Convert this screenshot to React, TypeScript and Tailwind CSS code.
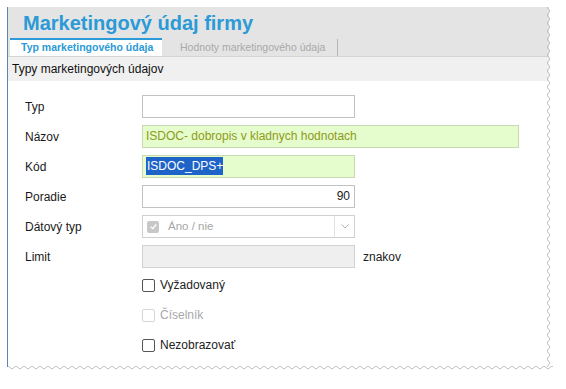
import React from 'react';

const Field = ({ label, children }: { label: string; children: React.ReactNode }) => (
  <div className="flex items-center h-[23px]">
    <div className="w-[117px] shrink-0 text-[12px] text-[#1a1a1a]">{label}</div>
    {children}
  </div>
);

const Check = ({ label, disabled }: { label: string; disabled?: boolean }) => (
  <div className="flex items-center gap-[5px] h-[14px]">
    <span
      className={
        'w-[13px] h-[13px] rounded-[2px] border bg-white ' +
        (disabled ? 'border-[#d6d6d6]' : 'border-[#555]')
      }
    />
    <span className={'text-[12px] ' + (disabled ? 'text-[#a8a8a8]' : 'text-[#222]')}>{label}</span>
  </div>
);

// torn paper edge, drawn as zigzag
const zig = (n: number, step: number, amp: number, vertical = false) => {
  const pts: string[] = [];
  for (let i = 0; i <= n; i++) {
    const a = i * step;
    const b = i % 2 ? amp : 0;
    pts.push(vertical ? `${b},${a}` : `${a},${b}`);
  }
  return pts.join(' ');
};

export default function App() {
  return (
    <div className="w-[566px] h-[389px] bg-white relative overflow-hidden" style={{ fontFamily: '"Liberation Sans", Arial, sans-serif' }}>
      <div className="absolute left-[7px] top-[7px] w-[542px] h-[360px] border-l-[1.5px] border-[#5a86b5] bg-white flex flex-col">
        {/* header */}
        <div className="bg-[#e4e4e4] border-b border-[#d4d4d4]">
          <div className="h-[31px] pl-[15px] pt-[3px] text-[20px] font-bold text-[#2b9ad6] leading-[26px]">
            Marketingový údaj firmy
          </div>
          <div className="flex items-end h-[18px]">
            <div className="ml-[2px] w-[152px] h-[18px] bg-white border-t-2 border-[#2b9ad6] text-[10.5px] font-bold text-[#2b9ad6] pl-[11px] leading-[15px]">
              Typ marketingového údaja
            </div>
            <div className="w-[176px] h-[17px] text-[10.5px] text-[#a9a9a9] pl-[18px] leading-[16px] border-r border-[#b5b5b5]">
              Hodnoty marketingového údaja
            </div>
          </div>
        </div>
        <div className="h-[24px] bg-[#f0f0f0] text-[12px] text-[#111] pl-[4px] leading-[24px]">
          Typy marketingových údajov
        </div>

        {/* form */}
        <div className="pl-[17px] pt-[14px] flex flex-col gap-[7px]">
          <Field label="Typ">
            <div className="w-[213px] h-[23px] border border-[#c2c2c2] bg-white" />
          </Field>
          <Field label="Názov">
            <div className="w-[377px] h-[23px] border border-[#c8d8b0] bg-[#e5fccc] text-[12px] text-[#8f9a20] pl-[3px] leading-[21px]">
              ISDOC- dobropis v kladnych hodnotach
            </div>
          </Field>
          <Field label="Kód">
            <div className="w-[213px] h-[23px] border border-[#c8d8b0] bg-[#e5fccc] text-[12px] pl-[3px] leading-[21px]">
              <span className="bg-[#1e63c8] text-white py-[2px] pl-[1px]">ISDOC_DPS+</span>
            </div>
          </Field>
          <Field label="Poradie">
            <div className="w-[213px] h-[23px] border border-[#c2c2c2] bg-white text-[12px] text-[#222] text-right pr-[4px] leading-[21px]">
              90
            </div>
          </Field>
          <Field label="Dátový typ">
            <div className="w-[213px] h-[23px] border border-[#d0d0d0] bg-white flex items-center">
              <span className="ml-[4px] w-[12px] h-[12px] rounded-[2px] bg-[#c8c8c8] flex items-center justify-center">
                <svg width="9" height="9" viewBox="0 0 10 10">
                  <path d="M2 5.2 L4.2 7.3 L8 2.8" fill="none" stroke="#fff" strokeWidth="1.5" />
                </svg>
              </span>
              <span className="ml-[9px] text-[11.5px] text-[#a6a6a6] flex-1">Áno / nie</span>
              <span className="w-[20px] h-[21px] border-l border-[#e2e2e2] flex items-center justify-center">
                <svg width="8" height="5" viewBox="0 0 8 5">
                  <path d="M0.5 0.5 L4 4 L7.5 0.5" fill="none" stroke="#b4b4b4" strokeWidth="1" />
                </svg>
              </span>
            </div>
          </Field>
          <Field label="Limit">
            <div className="w-[213px] h-[23px] border border-[#d2d2d2] bg-[#efefef]" />
            <span className="ml-[8px] text-[12px] text-[#222]">znakov</span>
          </Field>
          <div className="pl-[117px] pt-[3px] flex flex-col gap-[16px]">
            <Check label="Vyžadovaný" />
            <Check label="Číselník" disabled />
            <Check label="Nezobrazovať" />
          </div>
        </div>

        {/* torn right edge */}
        <svg className="absolute right-[-3px] top-0" width="5" height="360" viewBox="0 0 5 360">
          <polyline points={zig(90, 4, 3, true)} fill="none" stroke="#bdbdbd" strokeWidth="1" />
        </svg>
        {/* torn bottom edge */}
        <svg className="absolute left-0 bottom-[-4px]" width="545" height="5" viewBox="0 0 545 5">
          <polyline points={zig(137, 4, 3)} fill="none" stroke="#bdbdbd" strokeWidth="1" />
        </svg>
      </div>
    </div>
  );
}
